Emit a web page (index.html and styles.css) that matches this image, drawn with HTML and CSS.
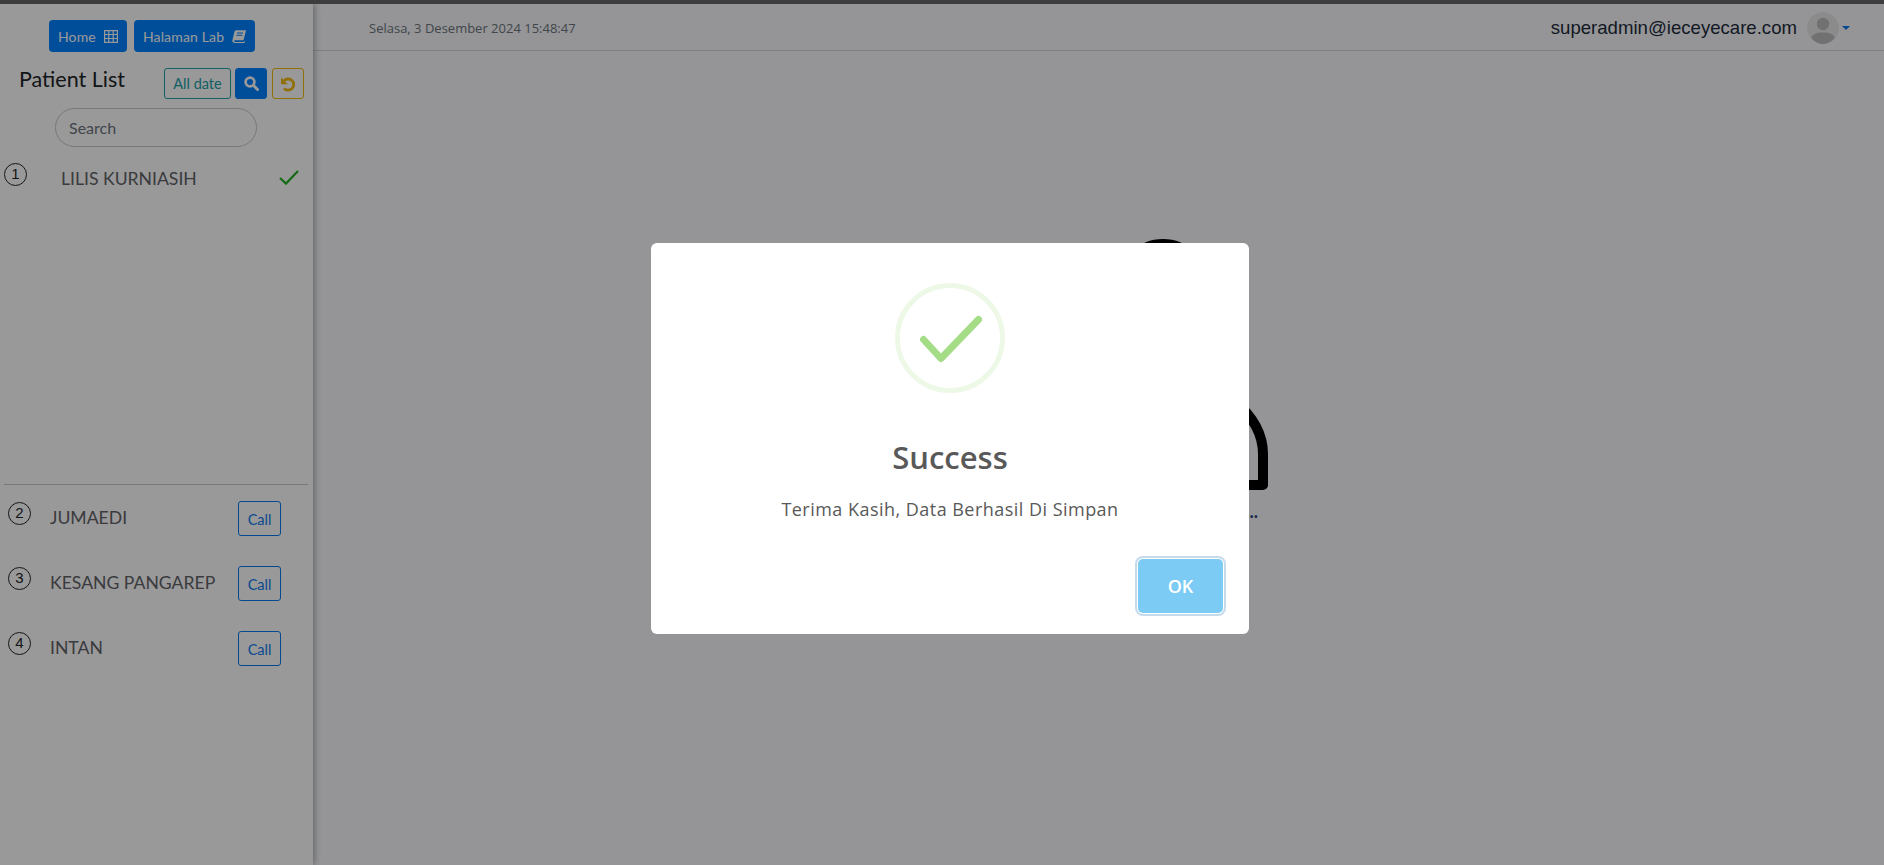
FILE: index.html
```html
<!DOCTYPE html>
<html lang="id">
<head>
  <meta charset="UTF-8" />
  <meta name="viewport" content="width=device-width, initial-scale=1.0" />
  <title>Patient List</title>
  <link rel="stylesheet" href="styles.css">
</head>
<body>
  <div class="top-strip"></div>
  <div class="layout">
    <!-- Sidebar -->
    <aside class="sidebar">
      <div class="nav-btns">
        <a class="btn-blue">Home
          <svg class="nav-icon" viewBox="0 0 14 13"><path d="M.6.6h12.800v11.800H.6zM.6 4.500h12.800M.6 8.500h12.800M4.800.6v11.800M9.200.6v11.800" fill="none" stroke="currentColor" stroke-width="1.200"/></svg>
        </a>
        <a class="btn-blue">Halaman Lab
          <svg class="nav-icon" viewBox="0 0 14 13"><path d="M4.200.3h9.300c.4 0 .5.300.4.600l-2.300 8.800c-.1.300-.3.500-.6.500H3c-1.200 0-1.300 1.700 0 1.700h8.800l.3-1 .8.200-.4 1.600c-.1.300-.2.400-.5.400H2.600C1 12.900 0 11.700.4 10.200l2-8.300C2.700.9 3.300.3 4.200.3z" fill="currentColor"/><path d="M5 3h6M4.400 5.200h6" stroke="#0082ff" stroke-width="1.100"/></svg>
        </a>
      </div>

      <div class="title-row">
        <h2 class="list-title">Patient List</h2>
        <button class="btn-date">All date</button>
        <button class="btn-search">
          <svg viewBox="0 0 16 16" width="15" height="15"><circle cx="6.400" cy="6.400" r="4.700" fill="none" stroke="currentColor" stroke-width="2.800"/><path d="M10.200 10.200l4.200 4.200" stroke="currentColor" stroke-width="3.200" stroke-linecap="round"/></svg>
        </button>
        <button class="btn-reset">
          <svg viewBox="0 0 16 16" width="16" height="16"><path d="M4 4.800A5.600 5.600 0 1 1 4 12.400" fill="none" stroke="currentColor" stroke-width="2.800"/><path d="M1 1.400v6.800h6.800z" fill="currentColor"/></svg>
        </button>
      </div>

      <input class="search-input" type="text" placeholder="Search" />

      <div class="done-list">
        <div class="done-row">
          <span class="num">1</span>
          <span class="done-name">LILIS KURNIASIH</span>
          <svg class="check" viewBox="0 0 20 15" width="20" height="15"><path d="M1 8l6 5.600L19 1" fill="none" stroke="currentColor" stroke-width="2.200"/></svg>
        </div>
      </div>

      <hr class="divider" />

      <div class="queue">
        <div class="queue-row">
          <span class="num">2</span>
          <span class="queue-name">JUMAEDI</span>
          <button class="btn-call">Call</button>
        </div>
        <div class="queue-row">
          <span class="num">3</span>
          <span class="queue-name">KESANG PANGAREP</span>
          <button class="btn-call">Call</button>
        </div>
        <div class="queue-row">
          <span class="num">4</span>
          <span class="queue-name">INTAN</span>
          <button class="btn-call">Call</button>
        </div>
      </div>
    </aside>

    <!-- Konten utama -->
    <main class="main">
      <header class="header">
        <span class="date">Selasa, 3 Desember 2024 15:48:47</span>
        <span class="email">superadmin@ieceyecare.com</span>
        <span class="avatar">
          <svg viewBox="0 0 32 32" width="32" height="32"><circle cx="16" cy="16" r="16" fill="#e8e8ea"/><circle cx="16" cy="12" r="6.200" fill="#bcbdbf"/><path d="M4.500 26c0-3.600 5-5.500 11.500-5.500s11.500 1.900 11.500 5.500c-2.800 3.600-7 6-11.500 6s-8.700-2.400-11.500-6z" fill="#bcbdbf"/></svg>
        </span>
        <span class="caret"></span>
      </header>
      <div class="empty">
        <svg class="empty-icon" viewBox="0 0 210 252" width="210" height="252">
          <circle cx="105" cy="45" r="40" fill="none" stroke="#000" stroke-width="10"/>
          <path d="M5 246V215A100 75 0 0 1 205 215V246Z" fill="none" stroke="#000" stroke-width="10" stroke-linejoin="round"/>
        </svg>
        <div class="empty-text">...</div>
      </div>
    </main>
  </div>

  <!-- Popup sukses -->
  <div class="overlay">
    <div class="modal">
      <div class="success-icon">
        <svg viewBox="0 0 110 110" width="110" height="110">
          <circle cx="55" cy="55" r="52.500" fill="none" stroke="#edf8e7" stroke-width="5"/>
          <path d="M28.500 56.500L46 75.500 83.500 36.500" fill="none" stroke="#a5dc86" stroke-width="7" stroke-linecap="round" stroke-linejoin="round"/>
        </svg>
      </div>
      <h2 class="modal-title">Success</h2>
      <p class="modal-text">Terima Kasih, Data Berhasil Di Simpan</p>
      <div class="modal-actions">
        <button class="btn-ok">OK</button>
      </div>
    </div>
  </div>
</body>
</html>
```

FILE: styles.css
```css
* { box-sizing: border-box; }
html, body { height: 100%; }
body {
  margin: 0;
  font-family: 'Lato', sans-serif;
  background: #fff;
  color: #212529;
  display: flex;
  flex-direction: column;
  overflow: hidden;
}
button { font-family: inherit; cursor: pointer; }

.top-strip {
  height: 4px;
  background: #3d3d3d;
  position: relative;
  z-index: 20;
}
.layout {
  flex: 1;
  display: flex;
  min-height: 0;
}

/* Sidebar */
.sidebar {
  width: 313px;
  background: #fff;
  padding-top: 16px;
  box-shadow: 2px 0 6px rgba(0, 0, 0, 0.3);
  position: relative;
}
.nav-btns {
  display: flex;
  gap: 7px;
  margin-left: 49px;
}
.btn-blue {
  height: 32px;
  padding: 0 9px;
  display: flex;
  align-items: center;
  background: #0082ff;
  color: #fff;
  border-radius: 4px;
  font-size: 14px;
  letter-spacing: 0.15px;
}
.nav-icon {
  width: 14px;
  height: 13px;
  margin-left: 8px;
}
.title-row {
  display: flex;
  align-items: flex-start;
  margin-top: 16px;
  padding-left: 19px;
  height: 31px;
}
.list-title {
  margin: -3px auto 0 0;
  font-size: 21.500px;
  line-height: 28px;
  font-weight: 400;
}
.title-row button {
  height: 31px;
  padding: 0;
  border-radius: 3px;
  display: flex;
  align-items: center;
  justify-content: center;
}
.btn-date {
  width: 67px;
  background: none;
  border: 1px solid #20a0a8;
  color: #20a0a8;
  font-size: 14.500px;
}
.btn-search {
  width: 32px;
  margin-left: 4px;
  background: #0082ff;
  border: 1px solid #0082ff;
  color: #fff;
}
.btn-reset {
  width: 32px;
  margin-left: 5px;
  margin-right: 9px;
  background: none;
  border: 1px solid #f2b90f;
  color: #f2b90f;
}
.search-input {
  display: block;
  width: 202px;
  height: 39px;
  margin: 9px 0 0 55px;
  padding: 0 13px;
  border: 1px solid #c6c8cc;
  border-radius: 20px;
  font-family: inherit;
  font-size: 16px;
  background: none;
}
.search-input::placeholder { color: #6c757d; opacity: 1; }
.num {
  width: 23px;
  height: 23px;
  flex: none;
  padding-bottom: 2px;
  border: 1px solid #212529;
  border-radius: 50%;
  display: flex;
  align-items: center;
  justify-content: center;
  font-family: 'Liberation Sans', sans-serif;
  font-size: 15px;
}
.done-list {
  height: 337px;
  padding: 16px 14px 0 4px;
}
.done-row {
  display: flex;
  align-items: flex-start;
}
.done-name {
  margin-left: 34px;
  font-size: 17.600px;
  line-height: 31px;
  color: #5f6368;
}
.check {
  margin: 7px 0 0 auto;
  color: #22b322;
}
.divider {
  margin: 0 5px 0 4px;
  border: none;
  border-top: 1px solid #c8c8c8;
}
.queue {
  display: flex;
  flex-direction: column;
  gap: 30px;
  padding: 16px 32px 0 8px;
}
.queue-row {
  display: flex;
  align-items: flex-start;
  height: 35px;
}
.queue-row .num { margin-top: 1px; }
.queue-name {
  margin-left: 19px;
  font-size: 17.600px;
  line-height: 33px;
  color: #5f6368;
}
.btn-call {
  width: 43px;
  height: 35px;
  margin-left: auto;
  padding: 1px 0 0;
  background: none;
  border: 1px solid #0d7bf0;
  border-radius: 3px;
  color: #0d7bf0;
  font-size: 14.500px;
}

/* Konten utama */
.main {
  flex: 1;
  min-width: 0;
  background: #f8f9fc;
}
.header {
  height: 47px;
  display: flex;
  align-items: center;
  padding: 2px 34px 0 56px;
  border-bottom: 1px solid #d5d7d9;
}
.date {
  margin-right: auto;
  font-family: 'Open Sans', sans-serif;
  font-size: 13px;
  color: #6c757d;
}
.email {
  font-family: 'Liberation Sans', sans-serif;
  font-size: 18.600px;
  color: #1d2b3a;
}
.avatar {
  display: flex;
  margin-left: 10px;
}
.caret {
  margin-left: 3px;
  border-top: 4px solid #0d7bf0;
  border-left: 4px solid transparent;
  border-right: 4px solid transparent;
}
.empty {
  width: 210px;
  margin: 188px 0 0 745px;
}
.empty-icon { display: block; }
.empty-text {
  margin-top: 8px;
  padding-right: 10px;
  text-align: right;
  font-size: 18px;
  font-weight: 700;
  line-height: 24px;
  color: #2b4a7a;
}

/* Popup */
.overlay {
  position: fixed;
  inset: 0;
  z-index: 10;
  background: rgba(0, 0, 0, 0.4);
  display: flex;
  align-items: center;
  justify-content: center;
  padding: 12px 0 0 16px;
}
.modal {
  width: 598px;
  height: 391px;
  padding: 40px 26px 0 21px;
  background: #fff;
  border-radius: 6px;
  text-align: center;
  color: #595959;
  font-family: 'Open Sans', sans-serif;
}
.success-icon {
  display: flex;
  justify-content: center;
  padding-left: 5px;
}
.success-icon svg { display: block; }
.modal-title {
  margin: 39px 0 0;
  padding-left: 5px;
  font-size: 31px;
  line-height: 50px;
  font-weight: 600;
}
.modal-text {
  margin: 14px 0 0;
  padding-left: 5px;
  font-size: 18px;
  line-height: 27px;
  letter-spacing: 0.47px;
  color: #595959;
}
.modal-actions {
  display: flex;
  justify-content: flex-end;
  margin-top: 36px;
}
.btn-ok {
  width: 85px;
  height: 54px;
  padding: 0;
  border: none;
  border-radius: 5px;
  background: #7ccbf5;
  color: #fff;
  font-family: inherit;
  font-size: 18px;
  font-weight: 600;
  box-shadow: 0 0 0 1px #fff, 0 0 0 3px #c5dbec;
}
```
